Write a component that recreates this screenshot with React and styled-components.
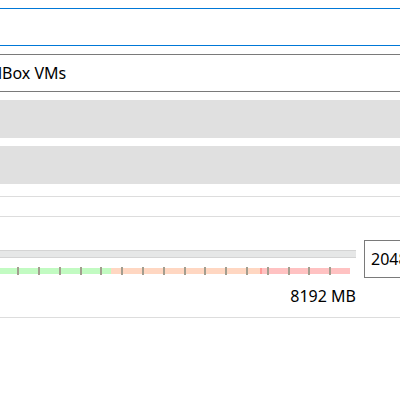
import React from "react";
import styled, { createGlobalStyle } from "styled-components";

const GlobalStyle = createGlobalStyle`
  body {
    margin: 0;
    background: #ffffff;
    font-family: "Noto Sans", "DejaVu Sans", sans-serif;
  }
`;

const Page = styled.div`
  width: 400px;
  height: 400px;
  overflow: hidden;
  background: #ffffff;
`;

const Form = styled.div`
  width: 480px;
  margin-left: -20px;
  padding-top: 8px;
  display: flex;
  flex-direction: column;
`;

const Field = styled.div`
  height: 38px;
  box-sizing: border-box;
  border-top: 1px solid ${(p) => (p.$focused ? "#0078d7" : "#7a7a7a")};
  border-bottom: 1px solid ${(p) => (p.$focused ? "#0078d7" : "#7a7a7a")};
  margin-bottom: 8px;
  display: flex;
  align-items: center;
  font-size: 16px;
  color: #000000;
  overflow: hidden;
  white-space: nowrap;
`;

const ClippedText = styled.span`
  margin-left: ${(p) => p.$shift}px;
`;

const DisabledBox = styled.div`
  height: 38px;
  background: #e0e0e0;
  margin-bottom: 8px;
`;

const Divider = styled.div`
  height: 1px;
  background: #dddddd;
  margin-top: ${(p) => p.$top}px;
`;

const SliderRow = styled.div`
  display: flex;
  align-items: flex-start;
  gap: 8px;
  margin-top: 23px;
`;

const SliderCol = styled.div`
  width: 376px;
  display: flex;
  flex-direction: column;
  padding-top: 10px;
`;

const Track = styled.div`
  height: 8px;
  box-sizing: border-box;
  border-top: 1px solid #d4d4d4;
  border-bottom: 1px solid #d4d4d4;
  background: #e6e7e7;
`;

const TickRow = styled.div`
  display: flex;
  height: 8px;
  margin: 9px 6px 0 18.3px;
  background-image: linear-gradient(
    to right,
    #c2fbc2 0,
    #c2fbc2 113.5px,
    #ffd7c2 113.5px,
    #ffd7c2 261.7px,
    #ff9c98 261.7px,
    #ff9c98 263.7px,
    #ffc2c2 263.7px
  );
  background-size: 100% 6px;
  background-position: 0 1px;
  background-repeat: no-repeat;
`;

const Tick = styled.div`
  flex: 1;
  box-sizing: border-box;
  border-right: 2px solid #a39e8f;

  &:last-child {
    border-right: none;
  }
`;

const ScaleLabels = styled.div`
  display: flex;
  justify-content: flex-end;
  font-size: 16px;
  line-height: 20px;
  margin-top: 11px;
  color: #000000;
`;

const NumberInput = styled.div`
  width: 80px;
  height: 38px;
  box-sizing: border-box;
  border: 1px solid #7a7a7a;
  display: flex;
  align-items: center;
  padding-left: 6px;
  font-size: 16px;
  color: #000000;
`;

const App = () => {
  const ticks = Array.from({ length: 17 });
  return (
    <Page>
      <GlobalStyle />
      <Form>
        <Field $focused />
        <Field>
          <ClippedText $shift={-27}>VirtualBox VMs</ClippedText>
        </Field>
        <DisabledBox />
        <DisabledBox />
        <Divider $top={4} />
        <Divider $top={19} />
        <SliderRow>
          <SliderCol>
            <Track />
            <TickRow>
              {ticks.map((_, i) => (
                <Tick key={i} />
              ))}
            </TickRow>
            <ScaleLabels>8192 MB</ScaleLabels>
          </SliderCol>
          <NumberInput>2048</NumberInput>
        </SliderRow>
        <Divider $top={11} />
      </Form>
    </Page>
  );
};

export default App;
